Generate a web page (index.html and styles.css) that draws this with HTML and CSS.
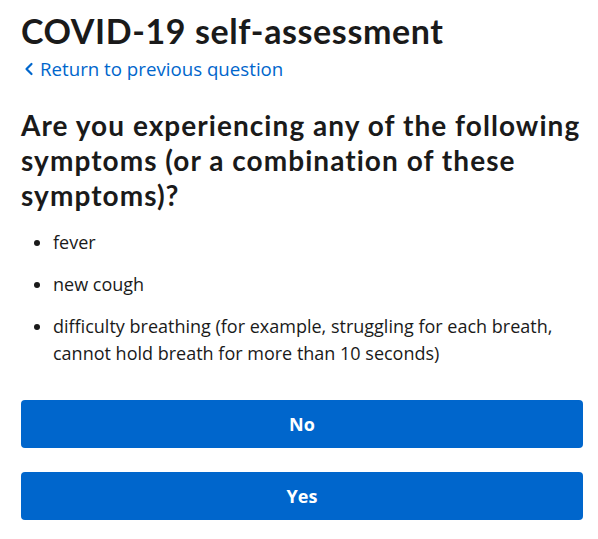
FILE: index.html
```html
<!DOCTYPE html>
<html lang="en">
<head>
    <meta charset="UTF-8">
    <meta name="viewport" content="width=device-width, initial-scale=1.0">
    <title>COVID-19 self-assessment</title>
    <link rel="stylesheet" href="styles.css">
</head>
<body>
    <main class="page">
        <h1 class="title">COVID-19 self-assessment</h1>
        <a class="back-link" href="#">
            <svg class="back-icon" width="10" height="14" viewBox="0 0 10 14" aria-hidden="true">
                <path d="M7.5 2 L2.5 7 L7.5 12" fill="none" stroke="currentColor" stroke-width="2.2" stroke-linecap="round" stroke-linejoin="round"/>
            </svg>
            Return to previous question
        </a>

        <h2 class="question">Are you experiencing any of the following symptoms (or a combination of these symptoms)?</h2>

        <ul class="symptoms">
            <li>fever</li>
            <li>new cough</li>
            <li>difficulty breathing (for example, struggling for each breath, cannot hold breath for more than 10 seconds)</li>
        </ul>

        <div class="answers">
            <button class="answer">No</button>
            <button class="answer">Yes</button>
        </div>
    </main>
</body>
</html>
```

FILE: styles.css
```css
body {
    margin: 0;
    font-family: "Open Sans", "Liberation Sans", sans-serif;
    color: #1a1a1a;
    background: #fff;
}
.page {
    padding: 11px 15px 0 21px;
}
.title {
    font-family: Lato, "Open Sans", sans-serif;
    font-weight: 700;
    font-size: 34px;
    line-height: 40px;
    margin: 0;
    letter-spacing: 0.6px;
}
.back-link {
    display: inline-flex;
    align-items: center;
    gap: 6px;
    margin: 4px 0 0 3px;
    color: #0066cc;
    font-size: 18.7px;
    line-height: 28px;
    text-decoration: none;
}
.question {
    font-family: Lato, "Open Sans", sans-serif;
    font-weight: 700;
    font-size: 28px;
    line-height: 35px;
    margin: 25px 0 0;
    letter-spacing: 1.05px;
}
.symptoms {
    margin: 16px 0 0;
    padding-left: 32px;
    font-size: 18px;
    line-height: 27px;
}
.symptoms li {
    margin-bottom: 15px;
}
.answers {
    display: flex;
    flex-direction: column;
    gap: 24px;
    margin-top: 33px;
}
.answer {
    height: 48px;
    border: none;
    border-radius: 4px;
    background: #0066cc;
    color: #fff;
    font-family: "Open Sans", "Liberation Sans", sans-serif;
    font-weight: 700;
    font-size: 18px;
    cursor: pointer;
}
```
